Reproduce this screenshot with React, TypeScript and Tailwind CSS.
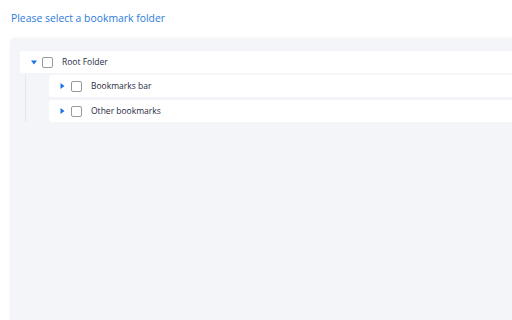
import React from "react";

const font = { fontFamily: '"Open Sans", "Noto Sans", sans-serif' };

function Down() {
  return (
    <svg width="6" height="5" viewBox="0 0 6 5" className="block">
      <path d="M0 0.5 H6 L3 4.5 Z" fill="#1a73e8" />
    </svg>
  );
}
function Right() {
  return (
    <svg width="5" height="6" viewBox="0 0 5 6" className="block">
      <path d="M0.5 0 V6 L4.5 3 Z" fill="#1a73e8" />
    </svg>
  );
}

function Box() {
  return <div className="w-[11px] h-[11px] border border-[#9a9a9a] rounded-[2px] bg-white shrink-0" />;
}

function Row({ label, open }: { label: string; open?: boolean }) {
  return (
    <div className="flex items-center h-[22px] bg-white rounded-l-[3px]">
      <div className="w-[11px] ml-[11px] flex items-center">{open ? <Down /> : <Right />}</div>
      <Box />
      <span className="ml-[9px] text-[8.5px] text-[#1f2a44] leading-none">{label}</span>
    </div>
  );
}

export default function App() {
  return (
    <div className="w-[512px] h-[320px] overflow-hidden bg-white" style={font}>
      <div className="pt-[11px] pl-[11px] text-[10.4px] leading-[15px] text-[#2b7bd9]">Please select a bookmark folder</div>
      <div className="mt-[13px] ml-[11px] w-[520px] h-[300px] bg-[#f4f5f9] rounded-[4px] shadow-[0_0_3px_rgba(0,0,0,0.12)] pt-[12px] pl-[9px]">
        <Row label="Root Folder" open />
        <div className="flex mt-[2px]">
          <div className="w-[6px] shrink-0 border-r border-[#e4e6ec]" />
          <div className="flex-1 ml-[23px] flex flex-col gap-[3px]">
            <Row label="Bookmarks bar" />
            <Row label="Other bookmarks" />
          </div>
        </div>
      </div>
    </div>
  );
}
